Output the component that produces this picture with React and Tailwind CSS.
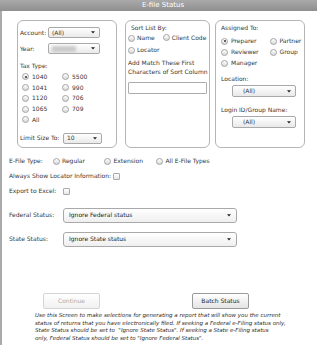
import React from "react";

const Radio = ({ checked }) => (
  <span className="inline-flex w-[7px] h-[7px] shrink-0 items-center justify-center rounded-full border border-[#a3a3a3] bg-gradient-to-b from-white to-[#d9d9d9]">
    {checked && <span className="w-[2px] h-[2px] rounded-full bg-[#333]" />}
  </span>
);

const Arrow = () => (
  <svg width="4" height="3" viewBox="0 0 4 3" className="shrink-0">
    <path d="M0 0.3H4L2 2.6Z" fill="#222" />
  </svg>
);

const Check = () => (
  <span className="inline-block w-[7px] h-[7px] shrink-0 rounded-[1px] border border-[#a9a9a9] bg-gradient-to-b from-white to-[#e6e6e6]" />
);

export default function App() {
  return (
    <div
      className="w-[317px] h-[345px] overflow-hidden bg-white text-[6px] leading-none text-[#353535] flex flex-col"
      style={{ fontFamily: '"DejaVu Sans", Verdana, sans-serif' }}
    >
      {/* Title bar */}
      <div className="h-[11px] shrink-0 bg-gradient-to-b from-[#a9a9a9] to-[#8f8f8f] flex items-center justify-center pl-[9px] text-white text-[7px]">
        E-file Status
      </div>

      <div className="flex-1 border-l-2 border-[#ababab] flex flex-col">
        {/* Panels */}
        <div className="mt-[9px] ml-[15px] flex h-[128px] shrink-0">
          {/* Panel 1 */}
          <div className="w-[100px] h-[128px] rounded-[6px] border border-[#b5b5b5] flex flex-col">
            <div className="mt-[6px] h-[11px] flex items-center pl-[2px]">
              <span className="w-[28px]">Account:</span>
              <div className="w-[52px] h-[11px] rounded-[2px] border border-[#a9a9a9] bg-gradient-to-b from-white to-[#e9e9e9] flex items-center justify-between pl-[3px] pr-[4px]">
                <span>(All)</span>
                <Arrow />
              </div>
            </div>
            <div className="mt-[5px] h-[11px] flex items-center pl-[2px]">
              <span className="w-[28px]">Year:</span>
              <div className="w-[52px] h-[11px] rounded-[2px] border border-[#a9a9a9] bg-gradient-to-b from-white to-[#e9e9e9] flex items-center justify-between pl-[3px] pr-[4px]">
                <span className="w-[24px] h-[6px] bg-[#c9c9c9] blur-[1.5px]" />
                <Arrow />
              </div>
            </div>
            <div className="mt-[8px] h-[8px] flex items-center pl-[2px]">Tax Type:</div>
            <div className="mt-[1.6px] pl-[4px] grid grid-cols-[40px_auto]">
              {[
                ["1040", "5500"],
                ["1041", "990"],
                ["1120", "706"],
                ["1065", "709"],
              ].map(([a, b], i) => (
                <React.Fragment key={a}>
                  <div className="h-[10.7px] flex items-center gap-[3px]">
                    <Radio checked={i === 0} />
                    <span>{a}</span>
                  </div>
                  <div className="h-[10.7px] flex items-center gap-[3px]">
                    <Radio />
                    <span>{b}</span>
                  </div>
                </React.Fragment>
              ))}
              <div className="h-[10.7px] flex items-center gap-[3px]">
                <Radio />
                <span>All</span>
              </div>
            </div>
            <div className="mt-[7.5px] h-[11px] flex items-center pl-[2px]">
              <span className="w-[43px]">Limit Size To:</span>
              <div className="w-[39px] h-[11px] rounded-[2px] border border-[#a9a9a9] bg-gradient-to-b from-white to-[#e9e9e9] flex items-center justify-between pl-[3px] pr-[4px]">
                <span>10</span>
                <Arrow />
              </div>
            </div>
          </div>

          {/* Panel 2 */}
          <div className="ml-[8px] w-[85px] h-[128px] rounded-[6px] border border-[#b5b5b5] flex flex-col">
            <div className="mt-[3px] h-[8px] flex items-center pl-[5px]">Sort List By:</div>
            <div className="mt-[1.5px] h-[9px] flex items-center pl-[2px]">
              <Radio />
              <span className="ml-[2px]">Name</span>
              <span className="ml-[8px]">
                <Radio />
              </span>
              <span className="ml-[2px]">Client Code</span>
            </div>
            <div className="mt-[3px] h-[9px] flex items-center pl-[2px]">
              <Radio />
              <span className="ml-[2px]">Locator</span>
            </div>
            <div className="mt-[3px] pl-[2px] leading-[9.5px] whitespace-nowrap">
              Add Match These First
              <br />
              Characters of Sort Column
            </div>
            <div className="mt-[5.5px] ml-[2px] w-[79px] h-[12px] border border-[#adadad] rounded-[1px] bg-white" />
          </div>

          {/* Panel 3 */}
          <div className="ml-[5px] w-[90px] h-[128px] rounded-[6px] border border-[#b5b5b5] flex flex-col">
            <div className="mt-[3px] h-[8px] flex items-center pl-[5px]">Assigned To:</div>
            <div className="mt-[4.5px] h-[9px] flex items-center pl-[5px]">
              <div className="w-[49px] flex items-center gap-[3px]">
                <Radio checked />
                <span>Preparer</span>
              </div>
              <div className="flex items-center gap-[2.5px]">
                <Radio />
                <span>Partner</span>
              </div>
            </div>
            <div className="mt-[2px] h-[9px] flex items-center pl-[5px]">
              <div className="w-[49px] flex items-center gap-[3px]">
                <Radio />
                <span>Reviewer</span>
              </div>
              <div className="flex items-center gap-[2.5px]">
                <Radio />
                <span>Group</span>
              </div>
            </div>
            <div className="mt-[2px] h-[9px] flex items-center pl-[5px]">
              <div className="flex items-center gap-[3px]">
                <Radio />
                <span>Manager</span>
              </div>
            </div>
            <div className="mt-[7.5px] h-[8px] flex items-center pl-[5px]">Location:</div>
            <div className="mt-[2px] ml-[16px] w-[64px] h-[12px] rounded-[2px] border border-[#a9a9a9] bg-gradient-to-b from-white to-[#e9e9e9] flex items-center justify-between pl-[10px] pr-[4px]">
              <span>(All)</span>
              <Arrow />
            </div>
            <div className="mt-[9px] h-[8px] flex items-center pl-[5px]">Login ID/Group Name:</div>
            <div className="mt-[2px] ml-[16px] w-[64px] h-[12px] rounded-[2px] border border-[#a9a9a9] bg-gradient-to-b from-white to-[#e9e9e9] flex items-center justify-between pl-[10px] pr-[4px]">
              <span>(All)</span>
              <Arrow />
            </div>
          </div>
        </div>

        {/* Lower section */}
        <div className="pl-[7px] flex flex-col">
          <div className="mt-[9px] h-[8px] flex items-center">
            <span className="w-[43.5px]">E-File Type:</span>
            <div className="w-[51px] flex items-center gap-[2.5px]">
              <Radio />
              <span>Regular</span>
            </div>
            <div className="w-[52px] flex items-center gap-[3px]">
              <Radio />
              <span>Extension</span>
            </div>
            <div className="flex items-center gap-[3px]">
              <Radio />
              <span>All E-File Types</span>
            </div>
          </div>
          <div className="mt-[7px] h-[8px] flex items-center">
            <span className="w-[104px] whitespace-nowrap">Always Show Locator Information:</span>
            <Check />
          </div>
          <div className="mt-[7px] h-[8px] flex items-center">
            <span className="w-[54px] whitespace-nowrap">Export to Excel:</span>
            <Check />
          </div>
          <div className="mt-[12.5px] h-[15px] flex items-center">
            <span className="w-[54px] whitespace-nowrap">Federal Status:</span>
            <div className="w-[174px] h-[15px] rounded-[3px] border border-[#a9a9a9] bg-gradient-to-b from-white to-[#efefef] flex items-center justify-between pl-[5px] pr-[5px] text-[#222]">
              <span>Ignore Federal status</span>
              <Arrow />
            </div>
          </div>
          <div className="mt-[9px] h-[15px] flex items-center">
            <span className="w-[54px] whitespace-nowrap">State Status:</span>
            <div className="w-[174px] h-[15px] rounded-[3px] border border-[#a9a9a9] bg-gradient-to-b from-white to-[#efefef] flex items-center justify-between pl-[5px] pr-[5px] text-[#222]">
              <span>Ignore State status</span>
              <Arrow />
            </div>
          </div>
          <div className="mt-[46.5px] h-[16px] flex items-center">
            <button className="ml-[34px] w-[57px] h-[16px] rounded-[2px] border border-[#d4d4d4] bg-gradient-to-b from-white to-[#f1f1f1] text-[#ababab] flex items-center justify-center">
              Continue
            </button>
            <button className="ml-[92px] w-[57px] h-[16px] rounded-[2px] border border-[#9a9a9a] bg-gradient-to-b from-white to-[#e4e4e4] text-[#222] flex items-center justify-center">
              Batch Status
            </button>
          </div>
          <div className="mt-[3px] ml-[26px] italic text-[5.5px] leading-[7.5px] whitespace-nowrap text-[#2a2a2a]">
            Use this Screen to make selections for generating a report that will show you the current
            <br />
            status of returns that you have electronically filed. If seeking a Federal e-Filing status only,
            <br />
            State Status should be set to &nbsp;"Ignore State Status". If seeking a State e-Filing status
            <br />
            only, Federal Status should be set to "Ignore Federal Status".
          </div>
        </div>
      </div>
    </div>
  );
}
